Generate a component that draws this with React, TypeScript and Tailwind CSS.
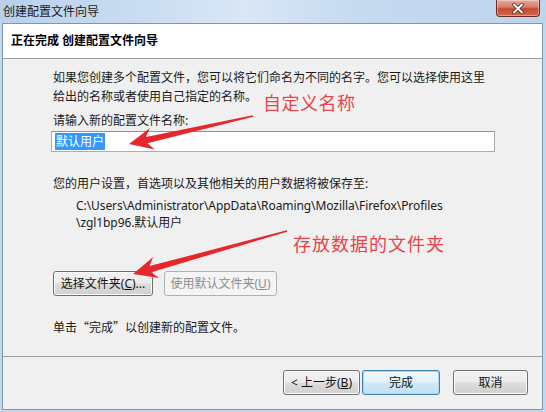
import React from "react";

const CJK = '"Noto Sans", "Noto Sans CJK SC", sans-serif';
const CJK_ONLY = '"Noto Sans CJK SC", sans-serif';

function arrowPoints(tx: number, ty: number, px: number, py: number) {
  const dx = px - tx;
  const dy = py - ty;
  const L = Math.hypot(dx, dy);
  const ux = dx / L;
  const uy = dy / L;
  const nx = -uy;
  const ny = ux;
  const h = 24;
  const w = 11;
  const s = 3.2;
  const t = 0.7;
  const bx = px - ux * h;
  const by = py - uy * h;
  const b2x = px - ux * (h - 6);
  const b2y = py - uy * (h - 6);
  const pts = [
    [tx + nx * t, ty + ny * t],
    [b2x + nx * s, b2y + ny * s],
    [bx + nx * w, by + ny * w],
    [px, py],
    [bx - nx * w, by - ny * w],
    [b2x - nx * s, b2y - ny * s],
    [tx - nx * t, ty - ny * t],
  ];
  return pts.map((p) => `${p[0].toFixed(1)},${p[1].toFixed(1)}`).join(" ");
}

function WinButton({
  children,
  className = "",
  variant = "normal",
}: {
  children: React.ReactNode;
  className?: string;
  variant?: "normal" | "default" | "disabled";
}) {
  const base =
    "h-[25px] rounded-[3px] border text-[12px] leading-none flex items-center justify-center";
  if (variant === "disabled") {
    return (
      <div
        className={`${base} border-[#adb2b5] bg-[#f4f4f4] text-[#8d8d8d] ${className}`}
      >
        {children}
      </div>
    );
  }
  if (variant === "default") {
    return (
      <div
        className={`${base} border-[#3c7fb1] bg-[linear-gradient(#f0f7fc_0%,#e5f2fa_48%,#d1e8f5_52%,#c3e0f2_100%)] text-[#111] shadow-[inset_0_0_0_1px_#a7d9f5] ${className}`}
      >
        {children}
      </div>
    );
  }
  return (
    <div
      className={`${base} border-[#707070] bg-[linear-gradient(#f2f2f2_0%,#ebebeb_48%,#dddddd_52%,#cfcfcf_100%)] text-[#111] shadow-[inset_0_0_0_1px_#fcfcfc] ${className}`}
    >
      {children}
    </div>
  );
}

export default function App() {
  return (
    <div
      className="relative w-[546px] h-[412px] overflow-hidden bg-[#c3d7ee] flex flex-col"
      style={{ fontFamily: CJK }}
    >
      {/* Title bar */}
      <div className="relative h-[23px] shrink-0 bg-[linear-gradient(90deg,#b8d0ea_0%,#c9dcf1_25%,#d9e7f6_45%,#c6daf0_65%,#bdd4ed_100%)] flex items-center pl-[3px] pt-[1px]">
        <span className="text-[12px] text-[#1a1a1a] leading-none">创建配置文件向导</span>
        <div className="absolute left-[496px] top-0 w-[44px] h-[17px] rounded-b-[4px] border border-t-0 border-[#6b2a22] bg-[linear-gradient(#e9a99c_0%,#d67a69_45%,#c44a33_55%,#d3674f_100%)] flex items-center justify-center shadow-[inset_0_0_0_1px_rgba(255,255,255,0.35)]">
          <svg width="12" height="11" viewBox="0 0 12 11">
            <path
              d="M2 1.5 L10 9.5 M10 1.5 L2 9.5"
              stroke="#4a1a12"
              strokeWidth="3.4"
              strokeLinecap="round"
            />
            <path
              d="M2 1.5 L10 9.5 M10 1.5 L2 9.5"
              stroke="#ffffff"
              strokeWidth="2"
              strokeLinecap="round"
            />
          </svg>
        </div>
      </div>

      {/* Window content */}
      <div className="ml-[2px] w-[541px] h-[387px] border border-[#8196ae] flex flex-col bg-[#f0f0f0]">
        {/* Header */}
        <div className="h-[35px] shrink-0 bg-white border-b border-[#a0a0a0] flex items-center pl-[8px]">
          <span className="text-[12px] font-bold text-[#000] leading-none">
            正在完成 创建配置文件向导
          </span>
        </div>

        {/* Body */}
        <div className="h-[297px] shrink-0 pl-[50px] pt-[9px] text-[12px] text-[#1a1a1a] flex flex-col items-start">
          <p className="leading-[19px] whitespace-nowrap">
            如果您创建多个配置文件，您可以将它们命名为不同的名字。您可以选择使用这里
          </p>
          <p className="leading-[19px] whitespace-nowrap">给出的名称或者使用自己指定的名称。</p>
          <p className="leading-[19px] mt-[5px]">请输入新的配置文件名称:</p>
          <div className="mt-[1px] -ml-[2px] w-[444px] h-[21px] bg-white border border-[#abadb3] border-t-[#8e9299] flex items-center pl-[3px]">
            <span className="bg-[#3399ff] text-white leading-[17px] px-[1px]">默认用户</span>
          </div>
          <p className="leading-[19px] mt-[22px]">
            您的用户设置，首选项以及其他相关的用户数据将被保存至:
          </p>
          <div className="pl-[23px] mt-[4px] leading-[17px] tracking-[-0.08px]">
            <p>C:\Users\Administrator\AppData\Roaming\Mozilla\Firefox\Profiles</p>
            <p>\zgl1bp96.默认用户</p>
          </div>
          <div className="flex mt-[40px]">
            <WinButton className="w-[100px]">选择文件夹(<span className="underline">C</span>)...</WinButton>
            <WinButton variant="disabled" className="w-[113px] ml-[11px]">
              使用默认文件夹(<span className="underline">U</span>)
            </WinButton>
          </div>
          <p className="leading-[19px] mt-[21px]">
            单击<span style={{ fontFamily: CJK_ONLY }}>“完成”</span>以创建新的配置文件。
          </p>
        </div>

        {/* Footer */}
        <div className="flex-1 border-t border-[#a0a0a0] flex justify-end items-start pt-[13px] pr-[14px]">
          <WinButton className="w-[77px]">
            &lt; 上一步(<span className="underline">B</span>)
          </WinButton>
          <WinButton variant="default" className="w-[78px] ml-[2px]">
            完成
          </WinButton>
          <WinButton className="w-[75px] ml-[13px]">取消</WinButton>
        </div>
      </div>

      {/* Annotations overlay */}
      <span className="absolute left-[263px] top-[93px] text-[18px] leading-[20px] text-[#e9434b] tracking-[0.5px]">
        自定义名称
      </span>
      <span className="absolute left-[293px] top-[234px] text-[18px] leading-[20px] text-[#e9434b] tracking-[1px]">
        存放数据的文件夹
      </span>
      <svg className="absolute left-0 top-0 pointer-events-none" width="546" height="412">
        <polygon points={arrowPoints(253, 116, 129, 144)} fill="#e8262d" />
        <polygon points={arrowPoints(287, 231, 133, 274)} fill="#e8262d" />
      </svg>
    </div>
  );
}
